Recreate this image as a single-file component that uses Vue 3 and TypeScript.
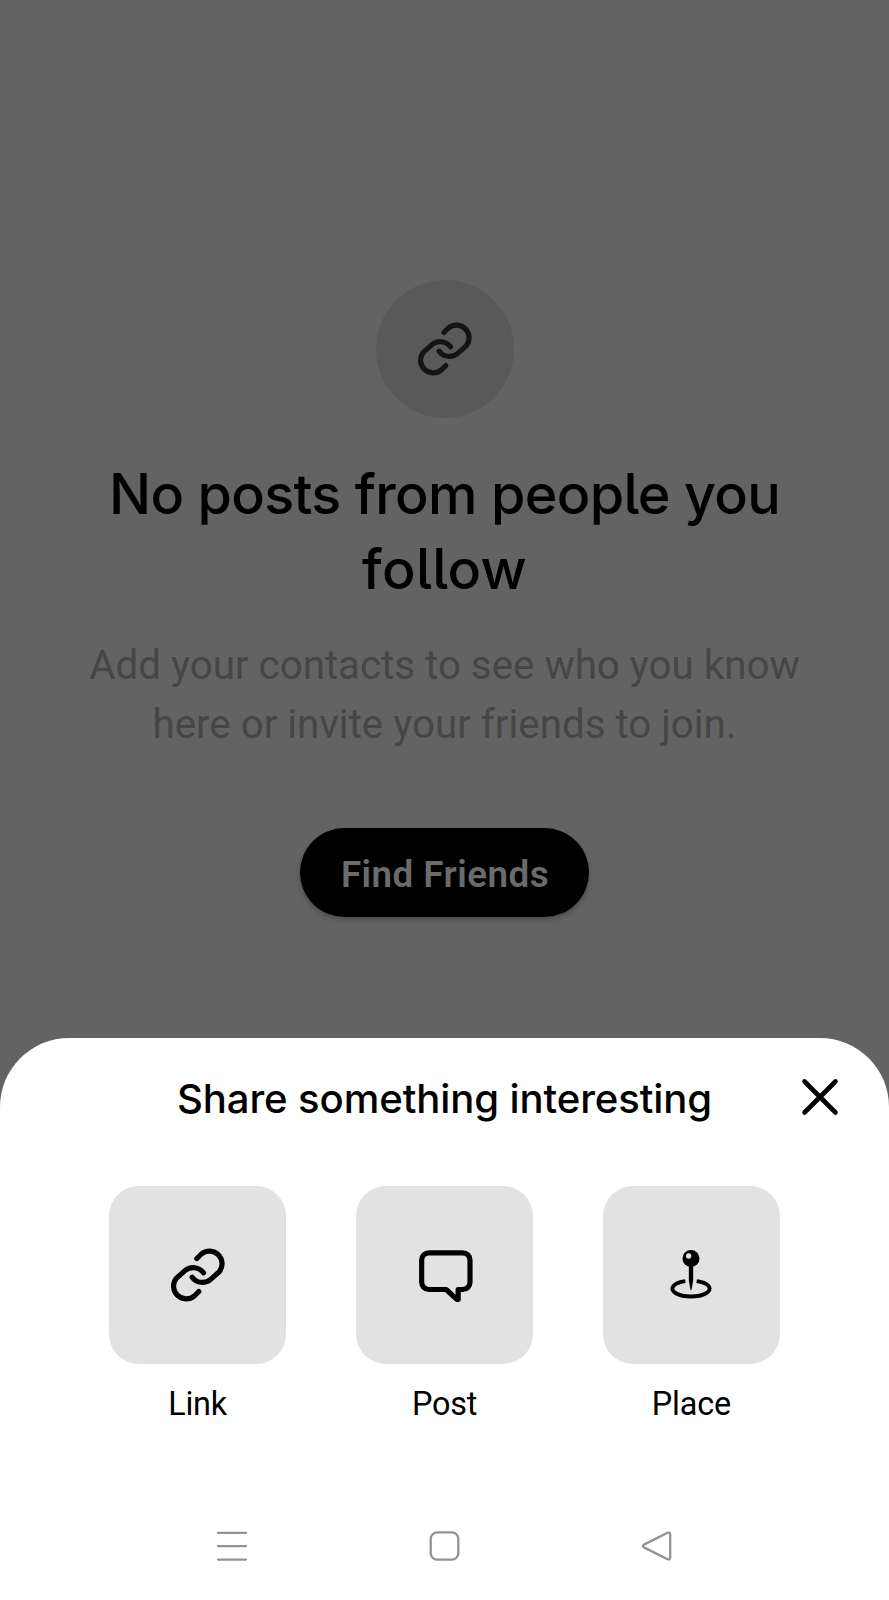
<script setup lang="ts">
type IconName = 'link' | 'post' | 'place'
interface ShareOption { icon: IconName; label: string }

const options: ShareOption[] = [
  { icon: 'link', label: 'Link' },
  { icon: 'post', label: 'Post' },
  { icon: 'place', label: 'Place' },
]
</script>

<template>
  <div class="screen">
    <main class="feed">
      <div class="badge">
        <svg class="icon" viewBox="204 195.5 180 180">
          <path d="M290.5 236L304 222.5A38 38 0 0 1 357.5 276L332 298.5A38 38 0 0 1 276.5 292" />
          <path d="M296.5 335L283 348.5A38 38 0 0 1 229.5 295L255 272.5A38 38 0 0 1 310.5 279" />
        </svg>
      </div>
      <h1 class="title">No posts from people you<br /><span class="title-end">follow</span></h1>
      <p class="body">Add your contacts to see who you know<br />here or invite your friends to join.</p>
      <button class="find">Find Friends</button>
    </main>

    <section class="sheet">
      <header class="sheet-head">
        <h2 class="sheet-title">Share something interesting</h2>
        <button class="close" aria-label="Close">
          <svg viewBox="0 0 40 40"><path d="M4.5 4.5L35.5 35.5M35.5 4.5L4.5 35.5" /></svg>
        </button>
      </header>

      <div class="options">
        <div v-for="o in options" :key="o.label" class="option">
          <div class="tile">
            <svg v-if="o.icon === 'link'" class="icon" viewBox="204 195.5 180 180">
              <path d="M290.5 236L304 222.5A38 38 0 0 1 357.5 276L332 298.5A38 38 0 0 1 276.5 292" />
              <path d="M296.5 335L283 348.5A38 38 0 0 1 229.5 295L255 272.5A38 38 0 0 1 310.5 279" />
            </svg>
            <svg v-else-if="o.icon === 'post'" class="icon" viewBox="209.5 195 180 180">
              <path d="M251 218.5H353A21.5 21.5 0 0 1 374.5 240V307A21.5 21.5 0 0 1 353 328.5H339V358H335L303 328.5H251A21.5 21.5 0 0 1 229.5 307V240A21.5 21.5 0 0 1 251 218.5Z" />
            </svg>
            <svg v-else class="icon pin" viewBox="199 195 180 180">
              <circle class="solid" cx="289" cy="235.5" r="25.5" />
              <circle class="shine" cx="282" cy="228" r="8" />
              <path class="solid" d="M282.5 258H295.5V302L290.5 329Q289 332 287.5 329L282.5 302Z" />
              <path d="M306 303.6A56 23.5 0 1 1 272 303.6" />
            </svg>
          </div>
          <span class="label">{{ o.label }}</span>
        </div>
      </div>

      <nav class="system-nav">
        <svg viewBox="0 0 36 36"><path d="M4 4.8H32M4 18.1H32M4 31.6H32" /></svg>
        <svg viewBox="0 0 36 36"><rect x="3.7" y="4.3" width="27.6" height="27.4" rx="6.5" /></svg>
        <svg viewBox="0 0 36 36"><path d="M28.5 4.8L5 16.6Q3 18 5 19.4L28.5 31.2Q31 32 31.2 29.5V6.5Q31 4 28.5 4.8Z" /></svg>
      </nav>
    </section>
  </div>
</template>

<style scoped>
.screen {
  width: 889px;
  height: 1600px;
  display: flex;
  flex-direction: column;
  background: #636363;
  overflow: hidden;
}
.feed {
  box-sizing: border-box;
  height: 1038px;
  flex: none;
  padding-top: 280px;
  display: flex;
  flex-direction: column;
  align-items: center;
}
.badge {
  width: 138px;
  height: 138px;
  border-radius: 50%;
  background: #595959;
  display: flex;
  align-items: center;
  justify-content: center;
}
.icon {
  width: 60px;
  height: 60px;
  fill: none;
  stroke: #000;
  stroke-width: 15.5;
  stroke-linecap: round;
  stroke-linejoin: round;
}
.badge .icon { stroke: #141414; }
.pin { stroke-width: 11.5; stroke-linecap: butt; }
.solid { fill: #000; stroke: none; }
.shine { fill: #e2e2e2; stroke: none; }
.title {
  margin: 39px 0 0;
  font: 500 55.7px/74.5px Inter, sans-serif;
  font-feature-settings: "cv05";
  letter-spacing: -0.68px;
  text-align: center;
  color: #000;
  white-space: nowrap;
}
.title-end { letter-spacing: 0.3px; }
.body {
  margin: 30px 0 0;
  font: 400 40.3px/59.4px Roboto, sans-serif;
  text-align: center;
  color: #464646;
  white-space: nowrap;
}
.find {
  box-sizing: border-box;
  width: 289px;
  height: 88.5px;
  margin: 73.5px 0 0;
  padding: 4px 0 0 1px;
  border: 0;
  border-radius: 45px;
  background: #000;
  color: #6b6b6b;
  font: 600 36.8px/84px Roboto, sans-serif;
  letter-spacing: 0.45px;
  box-shadow: 0 3px 5px rgba(0, 0, 0, 0.22);
}
.sheet {
  box-sizing: border-box;
  flex: 1;
  display: flex;
  flex-direction: column;
  padding-top: 36px;
  background: #fff;
  border-radius: 69px 69px 0 0;
}
.sheet-head {
  display: grid;
  grid-template-columns: 89px 1fr 40px;
  align-items: center;
  height: 48px;
  padding-right: 49px;
}
.sheet-title {
  grid-column: 2;
  margin: 0;
  padding-top: 1px;
  font: 550 40.1px/48px Inter, sans-serif;
  letter-spacing: -0.1px;
  text-align: center;
  color: #000;
  white-space: nowrap;
}
.close {
  width: 40px;
  height: 40px;
  padding: 0;
  border: 0;
  background: none;
}
.close svg {
  display: block;
  margin-top: -3px;
  fill: none;
  stroke: #000;
  stroke-width: 4.6;
  stroke-linecap: round;
}
.options {
  display: flex;
  justify-content: center;
  gap: 69.3px;
  margin-top: 64px;
}
.option {
  display: flex;
  flex-direction: column;
  align-items: center;
  gap: 20px;
}
.tile {
  width: 177.6px;
  height: 178px;
  border-radius: 30px;
  background: #e2e2e2;
  display: flex;
  align-items: center;
  justify-content: center;
}
.label {
  font: 400 32.4px/40px Roboto, sans-serif;
  letter-spacing: -0.2px;
  color: #000;
}
.system-nav {
  display: flex;
  justify-content: center;
  gap: 176.3px;
  margin-top: 103.5px;
}
.system-nav svg {
  width: 36px;
  height: 36px;
  fill: none;
  stroke: #929292;
  stroke-width: 2.3;
  stroke-linecap: round;
  stroke-linejoin: round;
}
</style>

<style>
body { margin: 0; background: #636363; }
</style>
